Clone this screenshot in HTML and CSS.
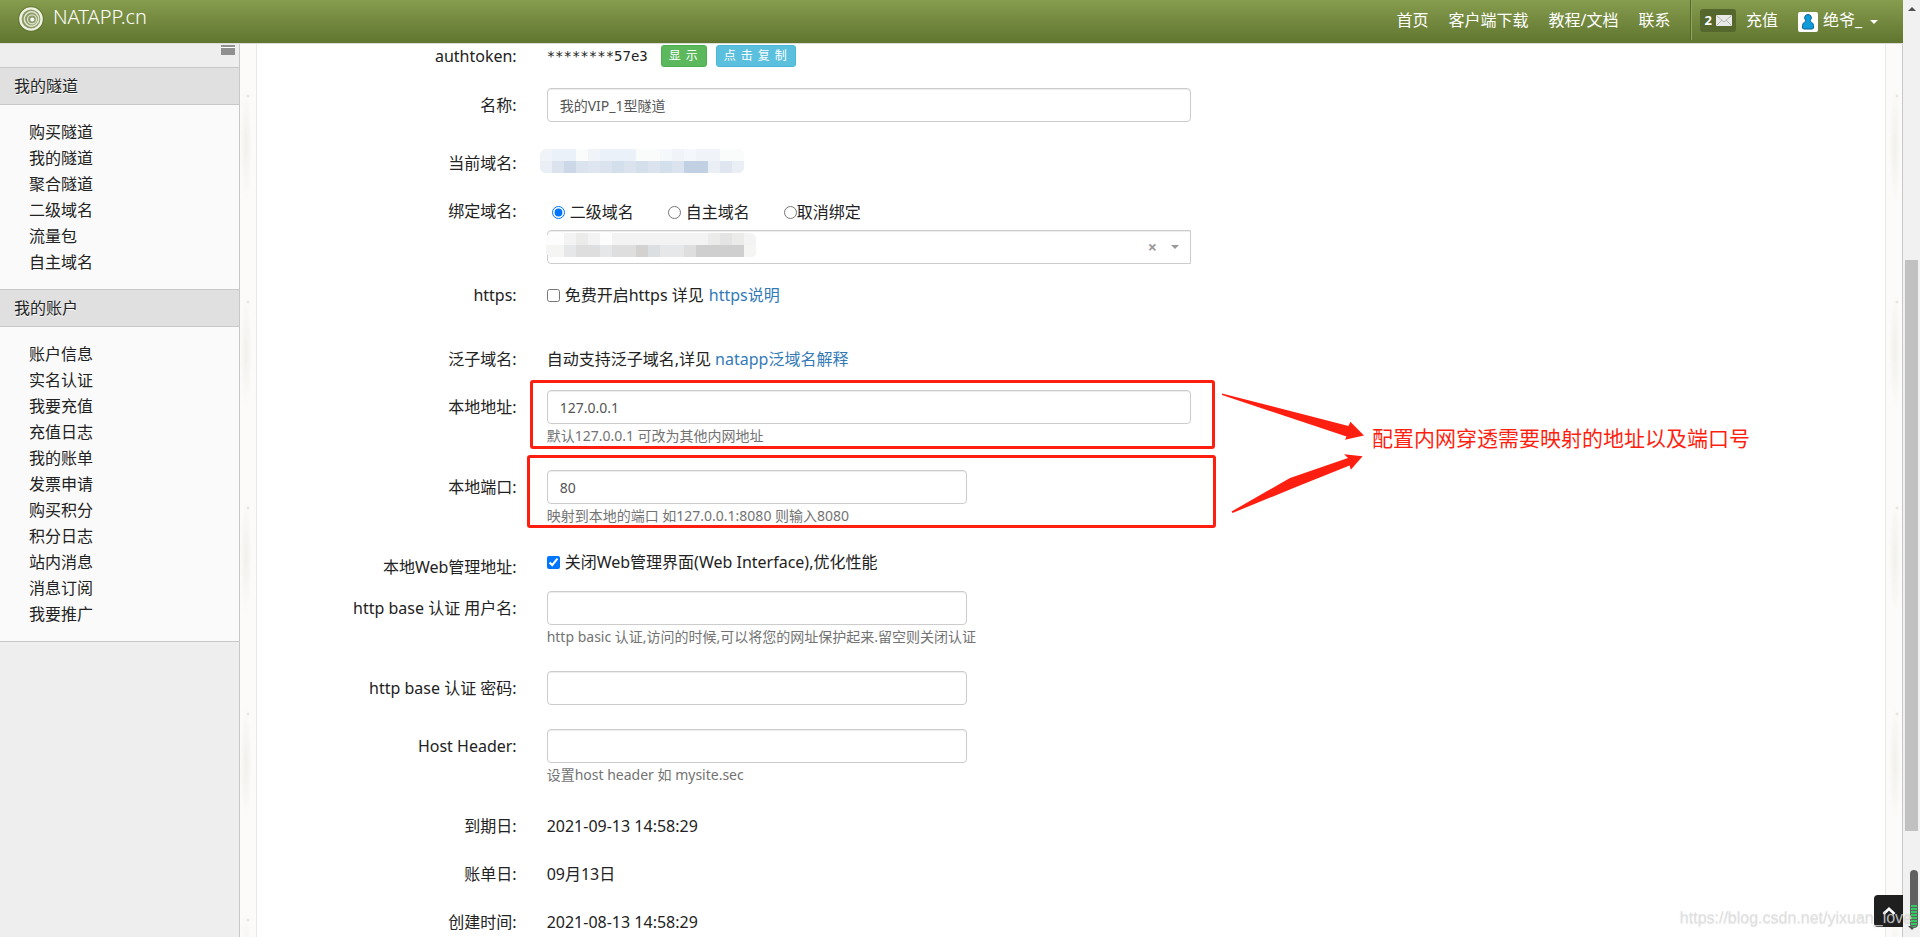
FILE: index.html
```html
<!DOCTYPE html>
<html lang="zh-CN">
<head>
<meta charset="utf-8">
<title>NATAPP.cn</title>
<link rel="stylesheet" href="styles.css">
</head>
<body>
<div class="page">
  <header class="topbar">
    <a class="brand" href="#">
      <svg class="brand-logo" viewBox="0 0 26 26" aria-hidden="true">
        <circle cx="13" cy="13" r="13" fill="#5d6f31" opacity=".6"/>
        <circle cx="13" cy="13" r="11" fill="#8c9b66"/>
        <g fill="none" stroke="#eef2e2">
          <circle cx="13" cy="13" r="10.600" stroke-width="2.400"/>
          <circle cx="13.500" cy="13" r="7.200" stroke-width="1.500" opacity=".85"/>
          <circle cx="14" cy="13.300" r="4.500" stroke-width="1.300" opacity=".8"/>
        </g>
        <circle cx="14.300" cy="13.400" r="2" fill="#fff"/>
      </svg>
      <span>NATAPP.cn</span>
    </a>
    <nav class="nav">
      <a href="#">首页</a>
      <a href="#">客户端下载</a>
      <a href="#">教程/文档</a>
      <a href="#">联系</a>
    </nav>
    <div class="user">
      <a class="mail" href="#"><b>2</b>
        <svg viewBox="0 0 16 11" aria-hidden="true"><rect width="16" height="11" rx="1" fill="#e9e9e7"/><path d="M1 10l5-5M15 10l-5-5M1 1l7 6 7-6" fill="none" stroke="#b5b5b0"/></svg>
      </a>
      <a href="#">充值</a>
      <button class="account" type="button">
        <svg class="avatar" viewBox="0 0 20 20" aria-hidden="true"><rect width="20" height="20" rx="2" fill="#fff"/><path d="M10 2.500a3.300 3.300 0 0 0-2.600 5.400c.7 1 .3 1.800-.8 2.300C4.800 11 4.500 12.500 4.500 16l1 1h9l1-1c0-3.500-.3-5-2.100-5.800-1.100-.5-1.500-1.300-.8-2.300A3.300 3.300 0 0 0 10 2.500z" fill="#0d9ddb" stroke="#075f8f"/></svg>
        <span>绝爷_</span>
        <i class="caret"></i>
      </button>
    </div>
  </header>

  <div class="body">
    <aside class="sidebar">
      <div class="collapse"><button class="collapse-btn" type="button" aria-label="菜单"></button></div>
      <h2>我的隧道</h2>
      <ul>
        <li><a href="#">购买隧道</a></li>
        <li><a href="#">我的隧道</a></li>
        <li><a href="#">聚合隧道</a></li>
        <li><a href="#">二级域名</a></li>
        <li><a href="#">流量包</a></li>
        <li><a href="#">自主域名</a></li>
      </ul>
      <h2>我的账户</h2>
      <ul>
        <li><a href="#">账户信息</a></li>
        <li><a href="#">实名认证</a></li>
        <li><a href="#">我要充值</a></li>
        <li><a href="#">充值日志</a></li>
        <li><a href="#">我的账单</a></li>
        <li><a href="#">发票申请</a></li>
        <li><a href="#">购买积分</a></li>
        <li><a href="#">积分日志</a></li>
        <li><a href="#">站内消息</a></li>
        <li><a href="#">消息订阅</a></li>
        <li><a href="#">我要推广</a></li>
      </ul>
    </aside>

    <main class="main">
      <form class="form">
        <div class="row row-first">
          <span class="label">authtoken:</span>
          <div class="control token">
            <code>********57e3</code>
            <button class="btn btn-green" type="button">显示</button>
            <button class="btn btn-blue" type="button">点击复制</button>
          </div>
        </div>

        <div class="row gap-20">
          <label class="label" for="name">名称:</label>
          <div class="control"><input class="text" id="name" type="text" value="我的VIP_1型隧道"></div>
        </div>

        <div class="row gap-24">
          <span class="label">当前域名:</span>
          <div class="control">
            <svg class="mosaic mosaic-link" viewBox="0 0 17 2" preserveAspectRatio="none" shape-rendering="crispEdges" aria-hidden="true">
              <path fill="#f0f4f9" d="M0 0h17v1H0z"/><path fill="#ebf1f8" d="M1 0h2v1H1zM5 0h3v1H5z"/><path fill="#fafcfc" d="M3 0h1v1H3zM8 0h2v1H8zM15 0h2v1h-2z"/><path fill="#f5f8fb" d="M10 0h1v1h-1zM12 0h1v1h-1z"/>
              <path fill="#dae3ee" d="M0 1h17v1H0z"/><path fill="#e9eff5" d="M0 1h1v1H0zM14 1h1v1h-1zM16 1h1v1h-1z"/><path fill="#ccd8e8" d="M2 1h1v1H2z"/><path fill="#d3dfeb" d="M6 1h1v1H6zM8 1h1v1H8zM10 1h1v1h-1z"/><path fill="#e0e6ef" d="M4 1h1v1H4zM15 1h1v1h-1z"/><path fill="#c2d0e3" d="M12 1h2v1h-2z"/>
            </svg>
          </div>
        </div>

        <div class="row gap-14">
          <span class="label">绑定域名:</span>
          <div class="control">
            <div class="radios">
              <label><input type="radio" name="bind" checked><span>二级域名</span></label>
              <label><input type="radio" name="bind"><span>自主域名</span></label>
              <label class="tight"><input type="radio" name="bind"><span>取消绑定</span></label>
            </div>
            <div class="combo">
              <select class="text select" aria-label="二级域名"><option></option></select>
              <button class="clear" type="button" aria-label="清除">×</button>
              <i class="caret caret-grey"></i>
              <svg class="mosaic mosaic-select" viewBox="0 0 35 4" preserveAspectRatio="none" shape-rendering="crispEdges" aria-hidden="true">
                <path fill="#f3f3f3" d="M0 0h35v2H0z"/><path fill="#fdfdfd" d="M0 0h3v2H0zM9 0h2v2H9z"/><path fill="#ebebea" d="M5 0h2v2H5zM27 0h2v2h-2zM31 0h2v2h-2z"/><path fill="#e5e4e5" d="M29 0h2v2h-2z"/>
                <path fill="#dedede" d="M0 2h35v2H0z"/><path fill="#f5f5f4" d="M0 2h3v2H0zM33 2h2v2h-2z"/><path fill="#e6e7e8" d="M3 2h2v2H3zM9 2h2v2H9zM19 2h4v2h-4z"/><path fill="#d4d2d0" d="M15 2h2v2h-2z"/><path fill="#dbdfe2" d="M17 2h2v2h-2z"/><path fill="#cfcfcf" d="M25 2h8v2h-8z"/>
              </svg>
            </div>
          </div>
        </div>

        <div class="row gap-14">
          <span class="label">https:</span>
          <div class="control check">
            <input type="checkbox" id="https"><label for="https">免费开启https 详见</label><a href="#">https说明</a>
          </div>
        </div>

        <div class="row gap-30">
          <span class="label">泛子域名:</span>
          <div class="control">自动支持泛子域名,详见 <a href="#">natapp泛域名解释</a></div>
        </div>

        <div class="row gap-14">
          <label class="label" for="addr">本地地址:</label>
          <div class="control">
            <input class="text" id="addr" type="text" value="127.0.0.1">
            <p class="help">默认127.0.0.1 可改为其他内网地址</p>
            <i class="frame frame-addr"></i>
          </div>
        </div>

        <div class="row gap-22">
          <label class="label" for="port">本地端口:</label>
          <div class="control">
            <input class="text short" id="port" type="text" value="80">
            <p class="help">映射到本地的端口 如127.0.0.1:8080 则输入8080</p>
            <i class="frame frame-port"></i>
          </div>
        </div>

        <div class="row gap-22">
          <span class="label">本地Web管理地址:</span>
          <div class="control check check-top">
            <input type="checkbox" id="web" checked><label for="web">关闭Web管理界面(Web Interface),优化性能</label>
          </div>
        </div>

        <div class="row gap-7">
          <label class="label" for="user">http base 认证 用户名:</label>
          <div class="control">
            <input class="text short" id="user" type="text">
            <p class="help">http basic 认证,访问的时候,可以将您的网址保护起来.留空则关闭认证</p>
          </div>
        </div>

        <div class="row gap-22">
          <label class="label" for="pass">http base 认证 密码:</label>
          <div class="control"><input class="text short" id="pass" type="text"></div>
        </div>

        <div class="row gap-24">
          <label class="label" for="host">Host Header:</label>
          <div class="control">
            <input class="text short" id="host" type="text">
            <p class="help">设置host header 如 mysite.sec</p>
          </div>
        </div>

        <div class="row gap-22"><span class="label">到期日:</span><div class="control">2021-09-13 14:58:29</div></div>
        <div class="row gap-14"><span class="label">账单日:</span><div class="control">09月13日</div></div>
        <div class="row gap-14"><span class="label">创建时间:</span><div class="control">2021-08-13 14:58:29</div></div>
      </form>

      <div class="note">
        <svg viewBox="0 0 146 124" aria-hidden="true">
          <path fill="#ff1f10" d="M2 3.500L128.500 36 130.400 31.700 144 45.500 125 49.700 126.500 46.500 2 5z"/>
          <path fill="#ff1f10" d="M11.500 121.500L70 88 128 68 124 64.300 142.600 66.300 130.800 79.700 129.600 75.500 76 97 12.500 123z"/>
        </svg>
        <span>配置内网穿透需要映射的地址以及端口号</span>
      </div>
    </main>
  </div>

  <button class="to-top" type="button" aria-label="返回顶部">
    <svg viewBox="0 0 14 8" aria-hidden="true"><path d="M1.500 7L7 1.800 12.500 7" fill="none" stroke="#fff" stroke-width="2.600"/></svg>
  </button>
</div>

<div class="scrollbar" aria-hidden="true">
  <i class="arrow-up"></i>
  <i class="space-before"></i>
  <i class="thumb"></i>
  <i class="space-after"></i>
  <i class="arrow-down"></i>
  <div class="meter"><i></i></div>
</div>
<span class="watermark">https://blog.csdn.net/yixuan_love</span>
</body>
</html>
```
FILE: styles.css
```css
* { box-sizing: border-box; }

body {
  margin: 0;
  height: 100vh;
  display: flex;
  overflow: hidden;
  position: relative;
  background: #fff;
  color: #222;
  font: 16px/24px "Noto Sans", "Noto Sans CJK SC", sans-serif;
}

a { color: #337ab7; text-decoration: none; }
button { font: inherit; border: 0; padding: 0; background: none; color: inherit; }
h2, ul, p { margin: 0; padding: 0; }
input, select { margin: 0; font: inherit; }

.page {
  flex: 1;
  min-width: 0;
  display: flex;
  flex-direction: column;
  position: relative;
  border-right: 1px solid #c8c8c8;
}

/* Top bar */
.topbar {
  flex: none;
  height: 44px;
  display: flex;
  align-items: flex-start;
  padding: 0 25px 0 18px;
  background: linear-gradient(#869c4e, #60752f);
  border-bottom: 1px solid #dcdcd8;
  color: #fff;
  margin-right: -1px;
}
.topbar a { color: #fff; }
.brand { display: flex; gap: 9px; margin-right: auto; font-size: 20px; line-height: 34px; font-weight: 300; }
.brand-logo { width: 26px; height: 26px; margin-top: 6px; }
.nav { display: flex; gap: 20px; line-height: 40px; padding-right: 20px; }
.user {
  display: flex;
  align-items: center;
  gap: 10px;
  height: 40px;
  padding-left: 9px;
  border-left: 1px solid #55682b;
  box-shadow: inset 1px 0 #90a65a;
}
.mail {
  display: flex;
  align-items: center;
  gap: 4px;
  height: 23px;
  padding: 0 4px;
  border-radius: 3px;
  background: #56672d;
  font-size: 13px;
}
.mail svg { width: 16px; height: 11px; }
.account { display: flex; align-items: center; gap: 5px; margin-left: 10px; }
.avatar { width: 20px; height: 20px; margin-top: 4px; }
.caret { border: 4px solid transparent; border-top-color: #fff; border-bottom: 0; margin-left: 3px; margin-top: 4px; }

/* Side menu */
.body { flex: 1; min-height: 0; display: flex; }
.sidebar { flex: none; width: 240px; background: #eee; border-right: 1px solid #c8c8c8; }
.collapse { height: 23px; display: flex; justify-content: flex-end; align-items: flex-start; padding: 1px 4px; }
.collapse-btn { width: 14px; height: 10px; background: linear-gradient(#909090 2px, #fff 2px, #fff 3px, #909090 3px); }
.sidebar h2 {
  height: 38px;
  padding-left: 14px;
  border: solid #c8c8c8;
  border-width: 1px 0;
  background: #e0e0e0;
  font-size: 16px;
  line-height: 36px;
  font-weight: 400;
  text-shadow: 0 1px #fff;
}
.sidebar ul { list-style: none; padding: 14px 0 14px 29px; background: #fafafa; }
.sidebar ul:last-child { border-bottom: 1px solid #c8c8c8; }
.sidebar li { line-height: 26px; }
.sidebar li a { color: #222; }

/* Form */
.main {
  flex: 1;
  min-width: 0;
  position: relative;
  padding: 0 16px;
  background:
    radial-gradient(circle at 8px 52px, #dddbd7 0, transparent 2px) 0 0 / 17px 206px,
    radial-gradient(ellipse at 6px 101px, #f1f0ed 0, transparent 6px) 0 0 / 17px 206px,
    #fcfbf9;
}
.form { background: #fff; border: solid #eae9e7; border-width: 0 1px; padding: 0 5px; }
.row { display: grid; grid-template-columns: minmax(0, 2fr) minmax(0, 5fr) minmax(0, 5fr); line-height: 34px; }
.row-first { line-height: 24px; }
.gap-7 { margin-top: 7px; }
.gap-14 { margin-top: 14px; }
.gap-20 { margin-top: 20px; }
.gap-22 { margin-top: 22px; }
.gap-24 { margin-top: 24px; }
.gap-30 { margin-top: 30px; }
.label { padding-right: 15px; text-align: right; }
.control { margin: 0 15px; position: relative; min-height: 24px; }
.token { display: flex; align-items: center; gap: 9px; }
.token code { width: 105px; font: 14px/24px "DejaVu Sans Mono", monospace; }
.btn { height: 22px; padding: 0 3px 0 7px; border: 1px solid; border-radius: 3px; color: #fff; font-size: 12px; line-height: 20px; letter-spacing: 5px; }
.btn-green { background: #5cb85c; border-color: #4cae4c; }
.btn-blue { background: #5bc0de; border-color: #46b8da; }
.text {
  display: block;
  width: 100%;
  height: 34px;
  padding: 6px 12px;
  border: 1px solid #ccc;
  border-radius: 4px;
  background: #fff;
  box-shadow: inset 0 1px 1px rgba(0, 0, 0, .075);
  color: #555;
  font-size: 14px;
  line-height: 20px;
}
.short { width: 420px; }
.help { color: #737373; font-size: 14px; line-height: 24px; white-space: nowrap; }
.radios { display: flex; gap: 34px; height: 36px; line-height: 36px; padding-left: 5px; }
.radios label { display: flex; align-items: center; gap: 5px; }
.radios .tight { gap: 0; }
.radios input, .check input { width: 13px; height: 13px; }
.combo { position: relative; }
.select { appearance: none; border-radius: 4px 0 0 4px; }
.clear { position: absolute; right: 34px; top: 5px; color: #999; font-size: 16px; line-height: 24px; font-weight: 700; }
.caret-grey { position: absolute; right: 12px; top: 11px; border-top-color: #999; }
.check { display: flex; align-items: center; }
.check label { margin: 0 5px; }
.check-top { height: 22px; }
.mosaic { position: absolute; height: 24px; border-radius: 6px; }
.mosaic-link { left: -7px; top: 3px; width: 204px; }
.mosaic-select { left: -1px; top: 3px; width: 210px; }

/* Marks over the form */
.frame { position: absolute; border: 3px solid #ff1f10; border-radius: 3px; }
.frame-addr { inset: -10px -24px -1px -17px; }
.frame-port { inset: -15px -25px 0 -20px; }
.note { position: absolute; left: 980px; top: 346px; display: flex; align-items: center; gap: 6px; color: #ff1f10; font-size: 21px; white-space: nowrap; }
.note svg { width: 146px; height: 124px; }
.note span { padding-bottom: 28px; }

.to-top {
  position: absolute;
  right: -1px;
  bottom: 10px;
  width: 29px;
  height: 32px;
  border-radius: 4px 0 0 4px;
  background: #1f1f1f;
  line-height: 0;
}
.to-top svg { width: 14px; height: 8px; }

/* Scroll bar */
.scrollbar { flex: none; width: 17px; position: relative; display: flex; flex-direction: column; align-items: center; background: #f1f1f1; padding: 7px 0; }
.scrollbar > i { display: block; flex: none; }
.arrow-up { border: 4px solid transparent; border-bottom-color: #505050; border-top: 0; }
.arrow-down { border: 4px solid transparent; border-top-color: #505050; border-bottom: 0; }
.scrollbar .thumb { width: 13px; flex: 571 0 0; background: #c1c1c1; }
.scrollbar .space-before { flex: 249 0 0; }
.scrollbar .space-after { flex: 95 0 0; }
.meter { position: absolute; right: 2px; bottom: 9px; width: 8px; height: 58px; border-radius: 4px; background: #606060; display: flex; align-items: flex-end; padding: 1px; }
.meter i { flex: 1; height: 22px; border-radius: 0 0 3px 3px; background: repeating-linear-gradient(#2ecc60 0 2px, #606060 2px 3px); }
.watermark { position: absolute; right: 8px; bottom: 7px; color: rgba(222, 222, 222, .8); font: 16px/24px "Liberation Sans", sans-serif; text-shadow: 0 1px 1px rgba(120, 120, 120, .2); }
```
